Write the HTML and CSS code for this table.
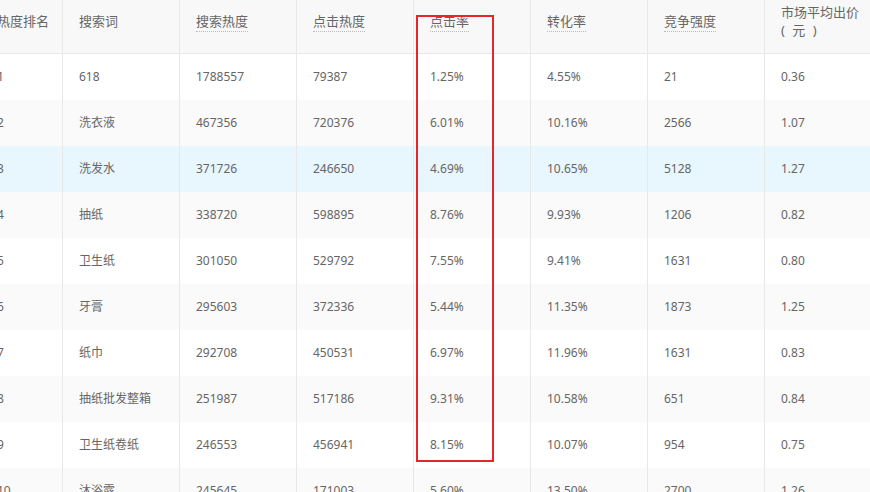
FILE: index.html
```html
<!DOCTYPE html>
<html lang="zh-CN">
<head>
<meta charset="utf-8">
<link rel="stylesheet" href="styles.css">
</head>
<body>
<div class="wrap">
<table class="grid">
<colgroup>
<col class="c-rank"><col class="c"><col class="c"><col class="c"><col class="c"><col class="c"><col class="c"><col class="c">
</colgroup>
<thead>
<tr>
<th>热度排名</th>
<th>搜索词</th>
<th><span class="tip">搜索热度</span></th>
<th><span class="tip">点击热度</span></th>
<th><span class="tip">点击率</span></th>
<th><span class="tip">转化率</span></th>
<th><span class="tip">竞争强度</span></th>
<th>市场平均出价<br><span class="unit">( 元 )</span></th>
</tr>
</thead>
<tbody>
<tr><td>1</td><td>618</td><td>1788557</td><td>79387</td><td>1.25%</td><td>4.55%</td><td>21</td><td>0.36</td></tr>
<tr><td>2</td><td>洗衣液</td><td>467356</td><td>720376</td><td>6.01%</td><td>10.16%</td><td>2566</td><td>1.07</td></tr>
<tr class="hover"><td>3</td><td>洗发水</td><td>371726</td><td>246650</td><td>4.69%</td><td>10.65%</td><td>5128</td><td>1.27</td></tr>
<tr><td>4</td><td>抽纸</td><td>338720</td><td>598895</td><td>8.76%</td><td>9.93%</td><td>1206</td><td>0.82</td></tr>
<tr><td>5</td><td>卫生纸</td><td>301050</td><td>529792</td><td>7.55%</td><td>9.41%</td><td>1631</td><td>0.80</td></tr>
<tr><td>6</td><td>牙膏</td><td>295603</td><td>372336</td><td>5.44%</td><td>11.35%</td><td>1873</td><td>1.25</td></tr>
<tr><td>7</td><td>纸巾</td><td>292708</td><td>450531</td><td>6.97%</td><td>11.96%</td><td>1631</td><td>0.83</td></tr>
<tr><td>8</td><td>抽纸批发整箱</td><td>251987</td><td>517186</td><td>9.31%</td><td>10.58%</td><td>651</td><td>0.84</td></tr>
<tr><td>9</td><td>卫生纸卷纸</td><td>246553</td><td>456941</td><td>8.15%</td><td>10.07%</td><td>954</td><td>0.75</td></tr>
<tr><td>10</td><td>沐浴露</td><td>245645</td><td>171003</td><td>5.60%</td><td>13.50%</td><td>2700</td><td>1.26</td></tr>
</tbody>
</table>
<div class="mark"></div>
</div>
</body>
</html>
```

FILE: styles.css
```css
html, body {
  margin: 0;
  padding: 0;
  background: #fff;
  overflow: hidden;
}
body {
  width: 870px;
  height: 492px;
  font-family: "Noto Sans", "Noto Sans CJK SC", sans-serif;
  color: #666;
}
.wrap {
  position: relative;
  width: 870px;
  height: 492px;
  overflow: hidden;
}
.grid {
  margin-left: -19px;
  table-layout: fixed;
  width: 901px;
  border-collapse: separate;
  border-spacing: 0;
}
.c-rank { width: 82px; }
.c { width: 117px; }
.grid th, .grid td {
  text-align: left;
  border-right: 1px solid #e8e8e8;
  padding: 0 15px 0 16px;
  vertical-align: middle;
  white-space: nowrap;
}
.grid th {
  height: 42px;
  padding-bottom: 11px;
  background: #f8f8f8;
  border-bottom: 1px solid #e8e8e8;
  font-size: 13px;
  font-weight: normal;
  line-height: 18px;
  color: #666;
}
.unit {
  letter-spacing: 2px;
  white-space: pre;
}
.grid td {
  height: 46px;
  font-size: 12px;
  line-height: 16px;
  color: #666;
}
.grid tbody tr:nth-child(even) td { background: #fafafa; }
.grid tbody tr.hover td { background: #e8f6fe; }
.tip {
  border-bottom: 1px dotted #bbb;
  padding-bottom: 1px;
}
.mark {
  position: absolute;
  left: 416px;
  top: 15px;
  width: 74px;
  height: 443px;
  border: 2px solid #e5262b;
}
```
